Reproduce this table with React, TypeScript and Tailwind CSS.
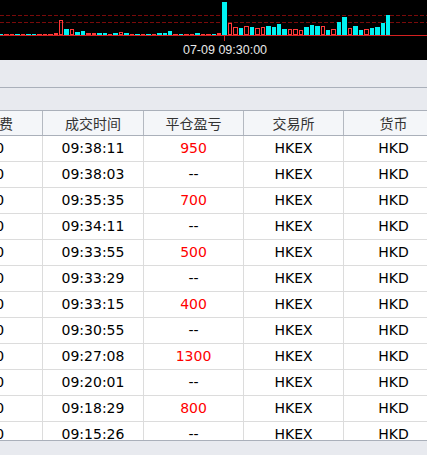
import React from "react";

// bar tops (y of the top edge); baseline sits at y=35
const tiny = ["c", "r", "r", "c", "r", "c", "c", "r", "r", "r"];
const bars: { top: number; up: boolean }[] = [
  ...tiny.map((t) => ({ top: 34, up: t === "c" })),
  { top: 33, up: false },
  { top: 20, up: false },
  ...[
    [29, 1], [29, 0], [32, 1], [31, 1], [33, 0], [33, 0], [33, 1], [33, 1], [34, 0], [33, 1],
    [32, 0], [33, 1], [34, 0], [34, 1], [34, 0], [34, 1], [34, 0], [33, 1], [33, 1], [31, 1],
    [34, 0], [34, 1], [34, 0], [34, 0], [33, 1], [34, 0], [34, 0], [34, 1], [33, 0], [2, 1],
    [23, 0], [27, 0], [28, 1], [26, 0], [27, 1], [28, 0], [27, 0], [26, 1], [27, 1], [24, 1],
    [29, 1], [29, 0], [29, 0], [30, 0], [27, 1], [25, 1], [26, 1], [26, 0], [30, 1], [29, 0],
    [22, 1], [17, 1], [28, 0], [26, 1], [30, 1], [29, 0], [28, 1], [27, 1], [23, 1], [15, 1],
  ].map(([top, up]) => ({ top, up: up === 1 })),
];

const rows = [
  { time: "09:38:11", pnl: "950" },
  { time: "09:38:03", pnl: "--" },
  { time: "09:35:35", pnl: "700" },
  { time: "09:34:11", pnl: "--" },
  { time: "09:33:55", pnl: "500" },
  { time: "09:33:29", pnl: "--" },
  { time: "09:33:15", pnl: "400" },
  { time: "09:30:55", pnl: "--" },
  { time: "09:27:08", pnl: "1300" },
  { time: "09:20:01", pnl: "--" },
  { time: "09:18:29", pnl: "800" },
  { time: "09:15:26", pnl: "--" },
];

const headers = ["手续费", "成交时间", "平仓盈亏", "交易所", "货币"];
const widths = ["w-[101px]", "w-[101px]", "w-[100px]", "w-[100px]", "w-[100px]"];

function VolumeChart() {
  return (
    <svg width={427} height={43} className="block">
      <line x1={0} y1={15.5} x2={427} y2={15.5} stroke="#7a0a0a" strokeDasharray="4 2" />
      <line x1={0} y1={22.5} x2={427} y2={22.5} stroke="#7a0a0a" strokeDasharray="4 2" />
      {bars.map((b, i) => {
        const x = Math.round(i * 5.45 - 1);
        const w = Math.round((i + 1) * 5.45 - 1) - x - 1;
        const h = 35 - b.top;
        return b.up ? (
          <rect key={i} x={x} y={b.top} width={w} height={h} fill="#00f2f2" />
        ) : (
          <rect key={i} x={x + 0.5} y={b.top + 0.5} width={w - 1} height={Math.max(h - 1, 0.5)} fill="none" stroke="#ff3b3b" />
        );
      })}
      <line x1={0} y1={35.5} x2={427} y2={35.5} stroke="#d42020" />
      <line x1={224.5} y1={35} x2={224.5} y2={41} stroke="#d42020" />
    </svg>
  );
}

export default function App() {
  return (
    <div className="w-[427px] h-[455px] overflow-hidden bg-[#e8eaef] flex flex-col">
      <div className="h-[60px] bg-black shrink-0">
        <VolumeChart />
        <div
          className="flex justify-center pl-[23px] text-[12.5px] leading-[14px] text-[#e8e8e8]"
          style={{ fontFamily: '"Liberation Sans", Arial, sans-serif' }}
        >
          07-09 09:30:00
        </div>
      </div>
      <div className="h-[27px] shrink-0" />
      <div className="h-px bg-[#aab0ba] shrink-0" />
      <div className="h-[22px] shrink-0" />
      <div className="h-[331px] shrink-0 overflow-hidden border-y border-[#aab0ba] bg-white">
        <div className="ml-[-58px] w-[502px]">
          <div
            className="flex h-[25px] bg-[#f4f6f9] border-b border-[#aab0ba] text-[14px] text-[#333]"
            style={{ fontFamily: '"Noto Sans CJK SC", "Liberation Sans", sans-serif' }}
          >
            {headers.map((h, i) => (
              <div key={h} className={`${widths[i]} shrink-0 border-r border-[#b4b9c1] flex items-center justify-center`}>
                {h}
              </div>
            ))}
          </div>
          {rows.map((r) => (
            <div
              key={r.time}
              className="flex h-[26px] border-b border-[#dcdcdc] text-[14px] text-black"
              style={{ fontFamily: '"DejaVu Sans", Verdana, sans-serif' }}
            >
              <div className={`${widths[0]} shrink-0 border-r border-[#dcdcdc] flex items-center justify-center pl-[2px]`}>0.0</div>
              <div className={`${widths[1]} shrink-0 border-r border-[#dcdcdc] flex items-center justify-center`}>{r.time}</div>
              <div className={`${widths[2]} shrink-0 border-r border-[#dcdcdc] flex items-center justify-center ${r.pnl === "--" ? "text-black" : "text-[#ff0000]"}`}>
                {r.pnl}
              </div>
              <div className={`${widths[3]} shrink-0 border-r border-[#dcdcdc] flex items-center justify-center`}>HKEX</div>
              <div className={`${widths[4]} shrink-0 border-r border-[#dcdcdc] flex items-center justify-center`}>HKD</div>
            </div>
          ))}
        </div>
      </div>
    </div>
  );
}
